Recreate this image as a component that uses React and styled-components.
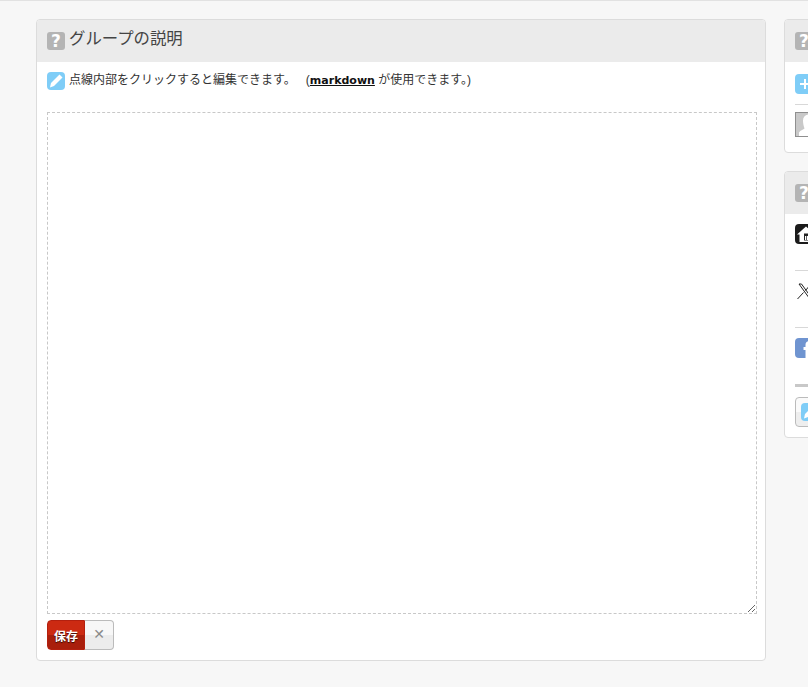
import React from 'react'
import styled, { createGlobalStyle } from 'styled-components'

const GlobalStyle = createGlobalStyle`
  html, body {
    margin: 0;
    padding: 0;
    height: 100%;
    overflow: hidden;
    background: #f7f7f7;
    font-family: "Liberation Sans", "Noto Sans CJK JP", sans-serif;
    color: #333;
  }
`

const Page = styled.div`
  box-sizing: border-box;
  width: 808px;
  height: 687px;
  overflow: hidden;
  border-top: 1px solid #e2e2e2;
  padding: 18px 0 0 36px;
  display: flex;
  align-items: flex-start;
  gap: 18px;
`

const MainColumn = styled.div`
  flex: 0 0 730px;
`

const SideColumn = styled.div`
  flex: 0 0 300px;
  display: flex;
  flex-direction: column;
  gap: 18px;
`

const Panel = styled.section`
  box-sizing: border-box;
  background: #fff;
  border: 1px solid #dcdcdc;
  border-radius: 4px;
  overflow: hidden;
`

const PanelHead = styled.header`
  box-sizing: border-box;
  height: 42px;
  background: #ebebeb;
  padding: 0 10px;
  display: flex;
  align-items: center;
  gap: 4px;
`

const PanelTitle = styled.h2`
  margin: 0;
  font-size: 16.4px;
  line-height: 20px;
  font-weight: 400;
  color: #444;
  position: relative;
  top: -3px;
`

const HelpBadge = styled.span`
  flex: none;
  width: 18px;
  height: 18px;
  border-radius: 3px;
  background: #b4b4b4;
  color: #fff;
  font-family: "DejaVu Sans", sans-serif;
  font-size: 17px;
  line-height: 18px;
  font-weight: 700;
  text-align: center;
`

const MainBody = styled.div`
  padding: 10px 8px 10px 10px;
`

const Hint = styled.p`
  margin: 0;
  height: 40px;
  display: flex;
  align-items: flex-start;
  gap: 4px;
  font-size: 12px;
  line-height: 17px;
  color: #333;
`

const HintText = styled.span`
  white-space: pre;
`

const Markdown = styled.a`
  font-family: "DejaVu Sans", sans-serif;
  font-size: 11px;
  font-weight: 700;
  color: #111;
  text-decoration: underline;
`

const Tile = styled.span`
  flex: none;
  box-sizing: border-box;
  width: ${p => p.$size || 18}px;
  height: ${p => p.$size || 18}px;
  border-radius: 4px;
  background: ${p => p.$bg || '#7fcdf7'};
  display: flex;
  align-items: center;
  justify-content: center;
  overflow: hidden;
`

const Editor = styled.textarea`
  display: block;
  box-sizing: border-box;
  width: 710px;
  height: 502px;
  margin: 0;
  padding: 8px;
  background: #fff;
  border: 1px dashed #c8c8c8;
  outline: none;
`

const Actions = styled.div`
  display: flex;
  margin-top: 6px;
`

const SaveButton = styled.button`
  box-sizing: border-box;
  width: 38px;
  height: 30px;
  padding: 0;
  border: 1px solid #b3200f;
  border-radius: 4px 0 0 4px;
  background: linear-gradient(#cc2a12 0 50%, #a91f0c 50% 100%);
  color: #fff;
  font-family: "Noto Sans CJK JP", sans-serif;
  font-size: 12px;
  font-weight: 700;
  text-shadow: 0 1px 1px rgba(0, 0, 0, 0.7);
`

const CancelButton = styled.button`
  box-sizing: border-box;
  width: 29px;
  height: 30px;
  padding: 0 0 2px;
  border: 1px solid #bbb;
  border-left: none;
  border-radius: 0 4px 4px 0;
  background: linear-gradient(#f7f7f7 0 50%, #ececec 50% 100%);
  color: #8a8a8a;
  font-family: "DejaVu Sans", sans-serif;
  font-size: 14px;
  font-weight: 700;
  line-height: 1;
`

const SideBody = styled.div`
  padding: 0 10px;
`

const SideRow = styled.div`
  box-sizing: border-box;
  height: ${p => p.$height}px;
  padding-top: ${p => p.$top || 0}px;
  border-bottom: ${p => p.$rule ? `${p.$rule}px solid ${p.$rule > 1 ? '#c8c8c8' : '#d8d8d8'}` : 'none'};
`

const Avatar = styled.span`
  display: block;
  box-sizing: border-box;
  width: 26px;
  height: 25px;
  background: #c9c9c9;
  border: 1px solid #8f8f8f;
  overflow: hidden;
`

const OutlineButton = styled.div`
  box-sizing: border-box;
  width: 120px;
  height: 30px;
  border: 1px solid #bbb;
  border-radius: 4px;
  background: linear-gradient(#fafafa 0 50%, #eee 50% 100%);
  padding: 5px;
`

function HelpIcon() {
  return <HelpBadge>?</HelpBadge>
}

function PencilTile() {
  return (
    <Tile>
      <svg width="16" height="16" viewBox="0 0 16 16">
        <path d="M11.500 1.500l3 3L6 13 2 14.500 3 10z" fill="#fff" />
      </svg>
    </Tile>
  )
}

function HomeIcon() {
  return (
    <svg width="20" height="20" viewBox="0 0 20 20">
      <path d="M11 2.500L2 10.500h2.500V18h13v-7.500H20z" fill="#fff" />
      <path d="M9 9.500h5v7H9z" fill="#222" />
      <path d="M10 12h3v4h-3z" fill="#fff" />
      <path d="M11.500 12v4" stroke="#222" strokeWidth=".7" />
    </svg>
  )
}

function XIcon() {
  return (
    <svg width="20" height="20" viewBox="0 0 20 20" fill="none" stroke="#222" strokeWidth="1">
      <path d="M4 3h2.500L17 17.500h-2.500z" />
      <path d="M16 3l-5.500 6.500M8.500 11.500L2.500 18" />
    </svg>
  )
}

function FacebookTile() {
  return (
    <Tile $size={20} $bg="#6f94d0">
      <svg width="20" height="20" viewBox="0 0 20 20">
        <path d="M9.500 20v-8H7.500V9h2V7c0-3 1.500-4 4-4h2.500v3h-1.500C13 6 12.500 6.500 12.500 7.500V9h3l-.5 3h-2.500v8z" fill="#fff" transform="translate(1 0)" />
      </svg>
    </Tile>
  )
}

function PersonIcon() {
  return (
    <svg width="24" height="23" viewBox="0 0 24 23">
      <path d="M1 23v-3c0-2 4-3 5.500-4.500C5.500 13 5 10 5 7.500 5 4 7.500 1.500 11 1.500S17 4 17 7.500c0 2.500-.5 5.500-1.500 8C17 17 21 18 21 20v3z" fill="#fff" transform="translate(2 0)" />
    </svg>
  )
}

export default function App() {
  return (
    <>
      <GlobalStyle />
      <Page>
        <MainColumn>
          <Panel>
            <PanelHead>
              <HelpIcon />
              <PanelTitle>グループの説明</PanelTitle>
            </PanelHead>
            <MainBody>
              <Hint>
                <PencilTile />
                <HintText>
                  点線内部をクリックすると編集できます。{'   '}(<Markdown>markdown</Markdown> が使用できます。)
                </HintText>
              </Hint>
              <Editor />
              <Actions>
                <SaveButton>保存</SaveButton>
                <CancelButton>✕</CancelButton>
              </Actions>
            </MainBody>
          </Panel>
        </MainColumn>
        <SideColumn>
          <Panel>
            <PanelHead><HelpIcon /></PanelHead>
            <SideBody>
              <SideRow $height={43} $top={12} $rule={1}>
                <Tile $size={20}>
                  <svg width="12" height="12" viewBox="0 0 12 12">
                    <path d="M5 1h2v4h4v2H7v4H5V7H1V5h4z" fill="#fff" />
                  </svg>
                </Tile>
              </SideRow>
              <SideRow $height={47} $top={7}>
                <Avatar><PersonIcon /></Avatar>
              </SideRow>
            </SideBody>
          </Panel>
          <Panel>
            <PanelHead><HelpIcon /></PanelHead>
            <SideBody>
              <SideRow $height={57} $top={10} $rule={1}>
                <Tile $size={20} $bg="#1b1b1b"><HomeIcon /></Tile>
              </SideRow>
              <SideRow $height={57} $top={10} $rule={1}>
                <Tile $size={20} $bg="transparent"><XIcon /></Tile>
              </SideRow>
              <SideRow $height={59} $top={10} $rule={3}>
                <FacebookTile />
              </SideRow>
              <SideRow $height={50} $top={10}>
                <OutlineButton><PencilTile /></OutlineButton>
              </SideRow>
            </SideBody>
          </Panel>
        </SideColumn>
      </Page>
    </>
  )
}
